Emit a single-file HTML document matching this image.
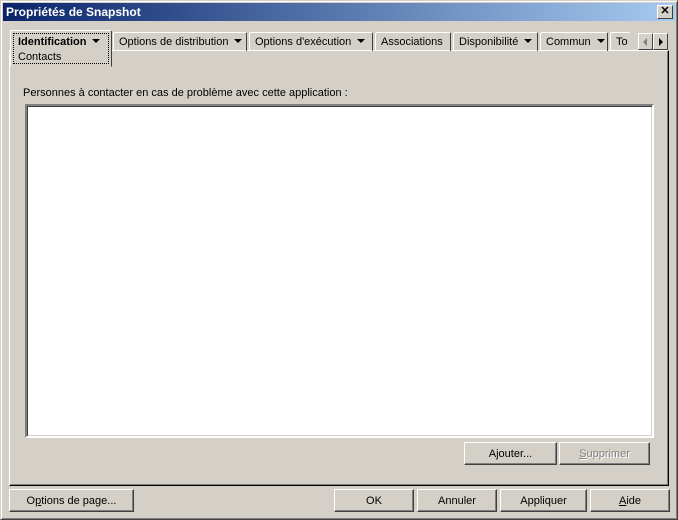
<!DOCTYPE html>
<html><head><meta charset="utf-8"><style>
*{box-sizing:border-box;margin:0;padding:0}
body{width:678px;height:520px;background:#d4d0c8;font-family:"Liberation Sans",sans-serif;font-size:11px;color:#000;position:relative;overflow:hidden}
.win{position:absolute;left:0;top:0;width:678px;height:520px;border:1px solid;border-color:#d4d0c8 #404040 #404040 #d4d0c8;box-shadow:inset 1px 1px #fff,inset -1px -1px #808080}
.title{position:absolute;left:3px;top:3px;width:672px;height:18px;background:linear-gradient(to right,#0a246a,#a6caf0);color:#fff;font-weight:bold;font-size:12px;line-height:19px;padding-left:3px}
.xbtn{position:absolute;right:2px;top:2px;width:16px;height:14px;background:#d4d0c8;border:1px solid;border-color:#fff #404040 #404040 #fff;color:#000;font-size:11px;line-height:11px;text-align:center;font-weight:bold}
.abs{position:absolute}
.tab{position:absolute;top:32px;height:19px;border:1px solid;border-bottom:none;border-color:#fff #404040 #fff #fff;border-radius:2px 2px 0 0;line-height:19px;padding-left:5px;white-space:nowrap;overflow:hidden}
.arr{display:inline-block;width:0;height:0;border-left:4px solid transparent;border-right:4px solid transparent;border-top:4px solid #000;margin-left:6px;vertical-align:2px}
.panel{position:absolute;left:9px;top:50px;width:660px;height:436px;border:1px solid;border-color:#fff #000 #000 #fff;box-shadow:inset -1px -1px #808080}
.btn{position:absolute;height:23px;border:1px solid;border-color:#fff #404040 #404040 #fff;box-shadow:inset -1px -1px #808080;text-align:center;line-height:23px}
</style></head><body>
<div class="win"></div>
<div class="title">Propriétés de Snapshot<div class="xbtn">✕</div></div>
<div class="panel"></div>
<div class="tab" style="left:113px;width:134px">Options de distribution<span class="arr"></span></div>
<div class="tab" style="left:249px;width:124px">Options d'exécution<span class="arr"></span></div>
<div class="tab" style="left:375px;width:76px">Associations</div>
<div class="tab" style="left:453px;width:85px">Disponibilité<span class="arr"></span></div>
<div class="tab" style="left:540px;width:68px">Commun<span class="arr"></span></div>
<div class="tab" style="left:610px;width:20px;border-right:none">To</div>
<div class="abs" style="left:10px;top:30px;width:102px;height:37px;background:#d4d0c8;border:1px solid;border-color:#fff #404040 #d4d0c8 #fff;border-radius:2px 2px 0 0"></div>
<div class="abs" style="left:13px;top:33px;width:96px;height:31px;border:1px dotted #000"></div>
<div class="abs" style="left:18px;top:36px;font-weight:bold">Identification<span class="arr"></span></div>
<div class="abs" style="left:18px;top:51px">Contacts</div>
<div class="abs" style="left:638px;top:33px;width:15px;height:17px;border:1px solid;border-color:#fff #404040 #404040 #fff"><div class="abs" style="left:4px;top:4px;border-top:4px solid transparent;border-bottom:4px solid transparent;border-right:4px solid #808080"></div></div>
<div class="abs" style="left:653px;top:33px;width:15px;height:17px;border:1px solid;border-color:#fff #404040 #404040 #fff"><div class="abs" style="left:5px;top:4px;border-top:4px solid transparent;border-bottom:4px solid transparent;border-left:4px solid #000"></div></div>
<div class="abs" style="left:23px;top:87px">Personnes à contacter en cas de problème avec cette application :</div>
<div class="abs" style="left:25px;top:104px;width:629px;height:334px;background:#fff;border:2px solid;border-color:#808080 #fff #fff #808080;box-shadow:inset 1px 1px #404040,inset -1px -1px #d4d0c8"></div>
<div class="btn" style="left:464px;top:442px;width:93px">Ajouter...</div>
<div class="btn" style="left:559px;top:442px;width:91px;color:#808080;text-shadow:1px 1px #fff"><u>S</u>upprimer</div>
<div class="btn" style="left:9px;top:489px;width:125px">O<u>p</u>tions de page...</div>
<div class="btn" style="left:334px;top:489px;width:80px">OK</div>
<div class="btn" style="left:417px;top:489px;width:80px">Annuler</div>
<div class="btn" style="left:500px;top:489px;width:87px">Appliquer</div>
<div class="btn" style="left:590px;top:489px;width:80px"><u>A</u>ide</div>
</body></html>
